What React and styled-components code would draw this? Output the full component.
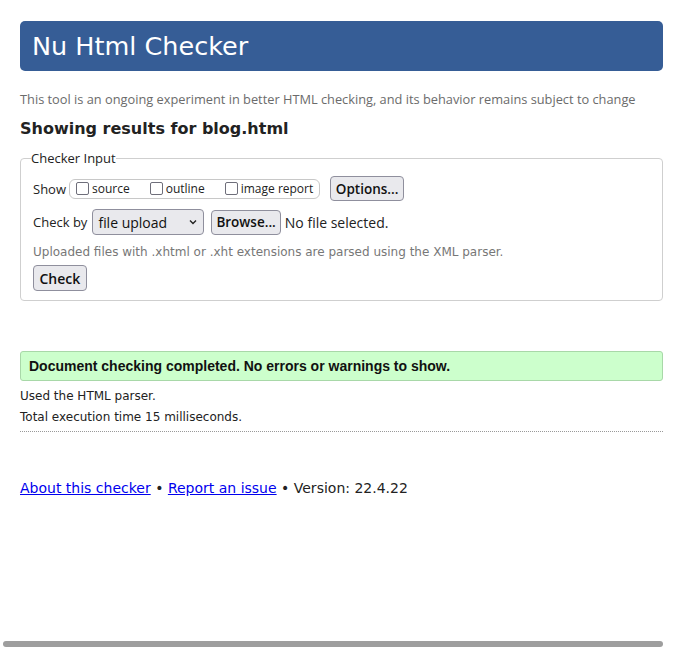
import React from "react";
import styled, { createGlobalStyle } from "styled-components";

const Global = createGlobalStyle`
  body {
    margin: 0;
    background: #fff;
    color: #222;
    font-family: "DejaVu Sans", sans-serif;
  }
`;

const Page = styled.div`
  width: 643px;
  padding: 21px 0 0 20px;
`;

const Header = styled.h1`
  margin: 0;
  height: 50px;
  display: flex;
  align-items: center;
  padding: 0 12px;
  background: #365d96;
  color: #fff;
  border-radius: 5px;
  font-family: "DejaVu Sans", sans-serif;
  font-weight: normal;
  font-size: 25.5px;
  box-sizing: border-box;
`;

const Intro = styled.p`
  margin: 20px 0 0;
  font-family: "Open Sans", sans-serif;
  font-size: 12.8px;
  color: #6b6b6b;
  line-height: 16px;
`;

const Results = styled.h2`
  margin: 12px 0 0;
  font-family: "DejaVu Sans", sans-serif;
  font-weight: bold;
  font-size: 16px;
  line-height: 20px;
  color: #222;
`;

const Fieldset = styled.fieldset`
  margin: 10px 0 0;
  padding: 9px 12px 9px 12px;
  border: 1px solid #cfcfcf;
  border-radius: 4px;
`;

const Legend = styled.legend`
  padding: 0;
  margin-left: -2px;
  font-family: "Open Sans", sans-serif;
  font-size: 13px;
  color: #222;
`;

const Row = styled.div`
  display: flex;
  align-items: center;
  gap: ${(p) => p.$gap || 4}px;
  margin-top: ${(p) => p.$mt || 0}px;
  font-family: "Open Sans", sans-serif;
  font-size: 13px;
  color: #222;
`;

const Group = styled.div`
  display: flex;
  align-items: center;
  height: 20px;
  box-sizing: border-box;
  border: 1px solid #c8c8c8;
  border-radius: 6px;
  padding: 0 6px 0 6px;
  margin: 0 6px 0 -1px;
`;

const CheckLabel = styled.label`
  display: flex;
  align-items: center;
  gap: 3px;
  font-size: 12px;
  margin-right: ${(p) => p.$mr || 0}px;
`;

const Box = styled.span`
  display: inline-block;
  width: 11px;
  height: 11px;
  border: 1px solid #6e6e7a;
  border-radius: 2px;
  background: #fff;
`;

const Button = styled.button`
  height: ${(p) => p.$h || 25}px;
  padding: 0 ${(p) => p.$px || 5}px;
  background: #e9e9ed;
  border: 1px solid #8f8f9d;
  border-radius: 4px;
  font-family: "Open Sans", sans-serif;
  font-size: ${(p) => p.$fs || 13.5}px;
  font-weight: 600;
  color: #111;
`;

const Select = styled.div`
  width: 112px;
  height: 26px;
  box-sizing: border-box;
  display: flex;
  align-items: center;
  justify-content: space-between;
  padding: 0 5px 0 5px;
  background: #e9e9ed;
  border: 1px solid #8f8f9d;
  border-radius: 4px;
  font-size: 14px;
  color: #111;
  margin: 0 4px 0 2px;
`;

const FileStatus = styled.span`
  font-size: 14px;
  margin-left: 1px;
`;

const Note = styled.p`
  margin: 9px 0 0;
  font-family: "DejaVu Sans", sans-serif;
  font-size: 12px;
  color: #777;
  line-height: 16px;
`;

const Success = styled.div`
  margin-top: 50px;
  height: 30px;
  box-sizing: border-box;
  display: flex;
  align-items: center;
  padding: 0 8px;
  background: #ccffcc;
  border: 1px solid #a8d8a8;
  border-radius: 3px;
  font-family: "Liberation Sans", Arial, sans-serif;
  font-weight: bold;
  font-size: 14px;
  color: #111;
`;

const Info = styled.p`
  margin: ${(p) => p.$mt || 0}px 0 0;
  font-family: "DejaVu Sans", sans-serif;
  font-size: 12px;
  line-height: 21px;
  color: #222;
`;

const Rule = styled.hr`
  margin: 3px 0 0;
  border: 0;
  border-top: 1px dotted #999;
`;

const Footer = styled.p`
  margin: 48px 0 0;
  font-family: "DejaVu Sans", sans-serif;
  font-size: 14px;
  color: #222;
`;

const A = styled.a`
  color: #0000ee;
  text-decoration: underline;
`;

const ScrollThumb = styled.div`
  position: fixed;
  left: 3px;
  top: 641px;
  width: 660px;
  height: 6px;
  border-radius: 3px;
  background: #9e9e9e;
`;

export default function App() {
  return (
    <>
      <Global />
      <Page>
        <Header>Nu Html Checker</Header>
        <Intro>
          This tool is an ongoing experiment in better HTML checking, and its behavior remains subject to change
        </Intro>
        <Results>Showing results for blog.html</Results>
        <Fieldset>
          <Legend>Checker Input</Legend>
          <Row $gap={4}>
            <span>Show</span>
            <Group>
              <CheckLabel $mr={20}><Box />source</CheckLabel>
              <CheckLabel $mr={20}><Box />outline</CheckLabel>
              <CheckLabel><Box />image report</CheckLabel>
            </Group>
            <Button $px={4.5}>Options...</Button>
          </Row>
          <Row $gap={3} $mt={8}>
            <span>Check by</span>
            <Select>
              <span>file upload</span>
              <svg width="10" height="10" viewBox="0 0 10 10">
                <path d="M2 3.5 L5 6.5 L8 3.5" fill="none" stroke="#222" strokeWidth="1.4" />
              </svg>
            </Select>
            <Button $px={4}>Browse...</Button>
            <FileStatus>No file selected.</FileStatus>
          </Row>
          <Note>Uploaded files with .xhtml or .xht extensions are parsed using the XML parser.</Note>
          <Row $mt={5}>
            <Button $h={26} $fs={14} $px={5.5}>Check</Button>
          </Row>
        </Fieldset>
        <Success>Document checking completed. No errors or warnings to show.</Success>
        <Info $mt={5}>Used the HTML parser.</Info>
        <Info>Total execution time 15 milliseconds.</Info>
        <Rule />
        <Footer>
          <A href="#">About this checker</A> • <A href="#">Report an issue</A> • Version: 22.4.22
        </Footer>
      </Page>
      <ScrollThumb />
    </>
  );
}
